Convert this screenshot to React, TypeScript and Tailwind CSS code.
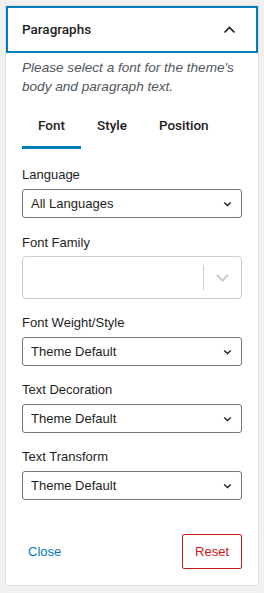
import { useState } from 'react';

const FONT = { fontFamily: '"Liberation Sans", Arial, sans-serif' };
const MEDIUM = { fontFamily: 'Roboto, "Liberation Sans", Arial, sans-serif' };

function Chevron() {
  return (
    <svg className="w-[9px] h-[6px] text-[#1e1e1e]" viewBox="0 0 9 6" fill="none" stroke="currentColor" strokeWidth="1.3">
      <path d="M1.2 1.5l3.3 3 3.3-3" />
    </svg>
  );
}

function SelectField({ label, value }: { label: string; value: string }) {
  return (
    <div className="flex flex-col">
      <label className="text-[13px] leading-[18px] text-[#1e1e1e] mb-[5px]">{label}</label>
      <div className="h-[29px] flex items-center justify-between border border-[#757575] rounded-[3px] pl-2 pr-[9px] bg-white">
        <span className="text-[13px] text-[#1e1e1e]">{value}</span>
        <Chevron />
      </div>
    </div>
  );
}

export default function App() {
  const [tab, setTab] = useState('Font');
  const tabs = ['Font', 'Style', 'Position'];

  return (
    <div className="min-h-screen bg-[#f0f0f0] p-[5px] pb-[7px]" style={FONT}>
      <div className="bg-white border border-[#e0e0e0]">
        <div className="h-[47px] border-2 border-[#007cba] flex items-center justify-between pl-[14px] pr-[20px]">
          <span className="text-[13.5px] font-medium text-[#1e1e1e]" style={MEDIUM}>Paragraphs</span>
          <svg className="w-[13px] h-[8px] text-[#1e1e1e]" viewBox="0 0 13 8" fill="none" stroke="currentColor" strokeWidth="1.6">
            <path d="M1.5 6.5l5-5 5 5" />
          </svg>
        </div>

        <div className="px-4 pb-4">
          <p className="mt-[5px] text-[13.6px] leading-[19px] italic text-[#50575e]">
            Please select a font for the theme's body and paragraph text.
          </p>

          <div className="flex mt-[5px]">
            {tabs.map((t) => (
              <button
                key={t}
                onClick={() => setTab(t)}
                style={MEDIUM}
                className={`h-[48px] px-4 pt-[3px] text-[13.5px] font-medium text-[#1e1e1e] border-b-[3px] ${
                  tab === t ? 'border-[#007cba]' : 'border-transparent'
                }`}
              >
                {t}
              </button>
            ))}
          </div>

          <div className="flex flex-col gap-[15px] mt-[17px]">
            <SelectField label="Language" value="All Languages" />

            <div className="flex flex-col mt-px">
              <label className="text-[13px] leading-[18px] text-[#1e1e1e] mb-[4px]">Font Family</label>
              <div className="h-[43px] flex items-center border border-[#cccccc] rounded-[4px] bg-white">
                <div className="flex-1" />
                <div className="w-px h-[25px] bg-[#cccccc]" />
                <div className="w-[37px] flex justify-center">
                  <svg className="w-[13px] h-[8px] text-[#cccccc]" viewBox="0 0 13 8" fill="none" stroke="currentColor" strokeWidth="2">
                    <path d="M1 1l5.5 5.5L12 1" />
                  </svg>
                </div>
              </div>
            </div>

            <SelectField label="Font Weight/Style" value="Theme Default" />
            <SelectField label="Text Decoration" value="Theme Default" />
            <SelectField label="Text Transform" value="Theme Default" />
          </div>

          <div className="flex items-center justify-between mt-[34px]">
            <button className="px-[6px] text-[13px] text-[#007cba]">Close</button>
            <button className="h-[35px] px-3 border border-[#cc1818] rounded-[2px] text-[13px] text-[#cc1818]">Reset</button>
          </div>
        </div>
      </div>
    </div>
  );
}
